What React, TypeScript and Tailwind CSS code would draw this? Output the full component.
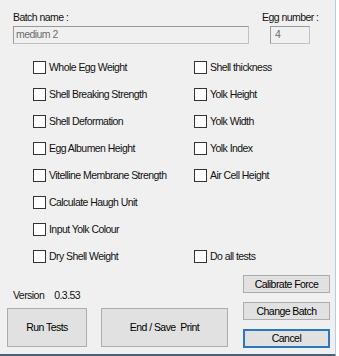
import React from 'react';

const leftTests = [
    'Whole Egg Weight',
    'Shell Breaking Strength',
    'Shell Deformation',
    'Egg Albumen Height',
    'Vitelline Membrane Strength',
    'Calculate Haugh Unit',
    'Input Yolk Colour',
    'Dry Shell Weight',
];

const rightTests: (string | null)[] = [
    'Shell thickness',
    'Yolk Height',
    'Yolk Width',
    'Yolk Index',
    'Air Cell Height',
    null,
    null,
    'Do all tests',
];

const CheckItem: React.FC<{ label: string }> = ({ label }) => (
    <label className="flex items-center gap-[3px] h-[27px]">
        <span className="size-[13px] border border-[#333333] bg-white shrink-0"></span>
        <span className="leading-[13px]">{label}</span>
    </label>
);

const WinButton: React.FC<{ label: string; className?: string }> = ({ label, className = '' }) => (
    <button className={`bg-[#e1e1e1] border border-[#adadad] text-black leading-none ${className}`}>{label}</button>
);

const App: React.FC = () => {
    return (
        <div className="w-[339px] h-[356px] bg-white overflow-hidden">
            <div
                className="w-[336px] h-[356px] bg-[#f0f0f0] border-r border-b-2 border-r-[#b9cde0] border-b-[#46627e] text-[10.5px] text-[#111111] tracking-[-0.55px] flex flex-col"
                style={{ fontFamily: '"Liberation Sans", Arial, sans-serif' }}
            >
                {/* Header: batch name + egg number */}
                <div className="flex pl-[13px] pt-[11px]">
                    <div className="flex flex-col">
                        <span className="leading-[13px]">Batch name :</span>
                        <div className="mt-[2px] w-[236px] h-[18px] border border-[#c2c2c2] border-t-[#9a9a9a] border-l-[#9a9a9a] px-[2px] flex items-center text-[#6d6d6d]">medium 2</div>
                    </div>
                    <div className="flex flex-col ml-[13px]">
                        <span className="leading-[13px]">Egg number :</span>
                        <div className="mt-[2px] ml-[8px] w-[40px] h-[18px] border border-[#c2c2c2] border-t-[#9a9a9a] border-l-[#9a9a9a] px-[4px] flex items-center text-[#6d6d6d]">4</div>
                    </div>
                </div>

                {/* Test checkboxes */}
                <div className="grid grid-cols-[161px_1fr] pl-[33px] mt-[10px]">
                    {leftTests.map((t, i) => (
                        <React.Fragment key={t}>
                            <CheckItem label={t} />
                            {rightTests[i] ? <CheckItem label={rightTests[i] as string} /> : <div className="h-[27px]"></div>}
                        </React.Fragment>
                    ))}
                </div>

                {/* Footer */}
                <div className="flex pl-[7px]">
                    <div className="flex flex-col w-[226px]">
                        <div className="pl-[6px] pt-[19px] h-[38px] flex gap-[10px] leading-[13px]">
                            <span>Version</span>
                            <span>0.3.53</span>
                        </div>
                        <div className="flex gap-[14px]">
                            <WinButton label="Run Tests" className="w-[80px] h-[39px]" />
                            <WinButton label="End / Save  Print" className="w-[127px] h-[39px] whitespace-pre" />
                        </div>
                    </div>
                    <div className="flex flex-col gap-[9px] pt-[5px] ml-[10px]">
                        <WinButton label="Calibrate Force" className="w-[87px] h-[18px]" />
                        <WinButton label="Change Batch" className="w-[87px] h-[18px]" />
                        <button className="w-[87px] h-[19px] bg-[#e1e1e1] border-2 border-[#2b78c0] text-black leading-none">Cancel</button>
                    </div>
                </div>
            </div>
        </div>
    );
};

export default App;
